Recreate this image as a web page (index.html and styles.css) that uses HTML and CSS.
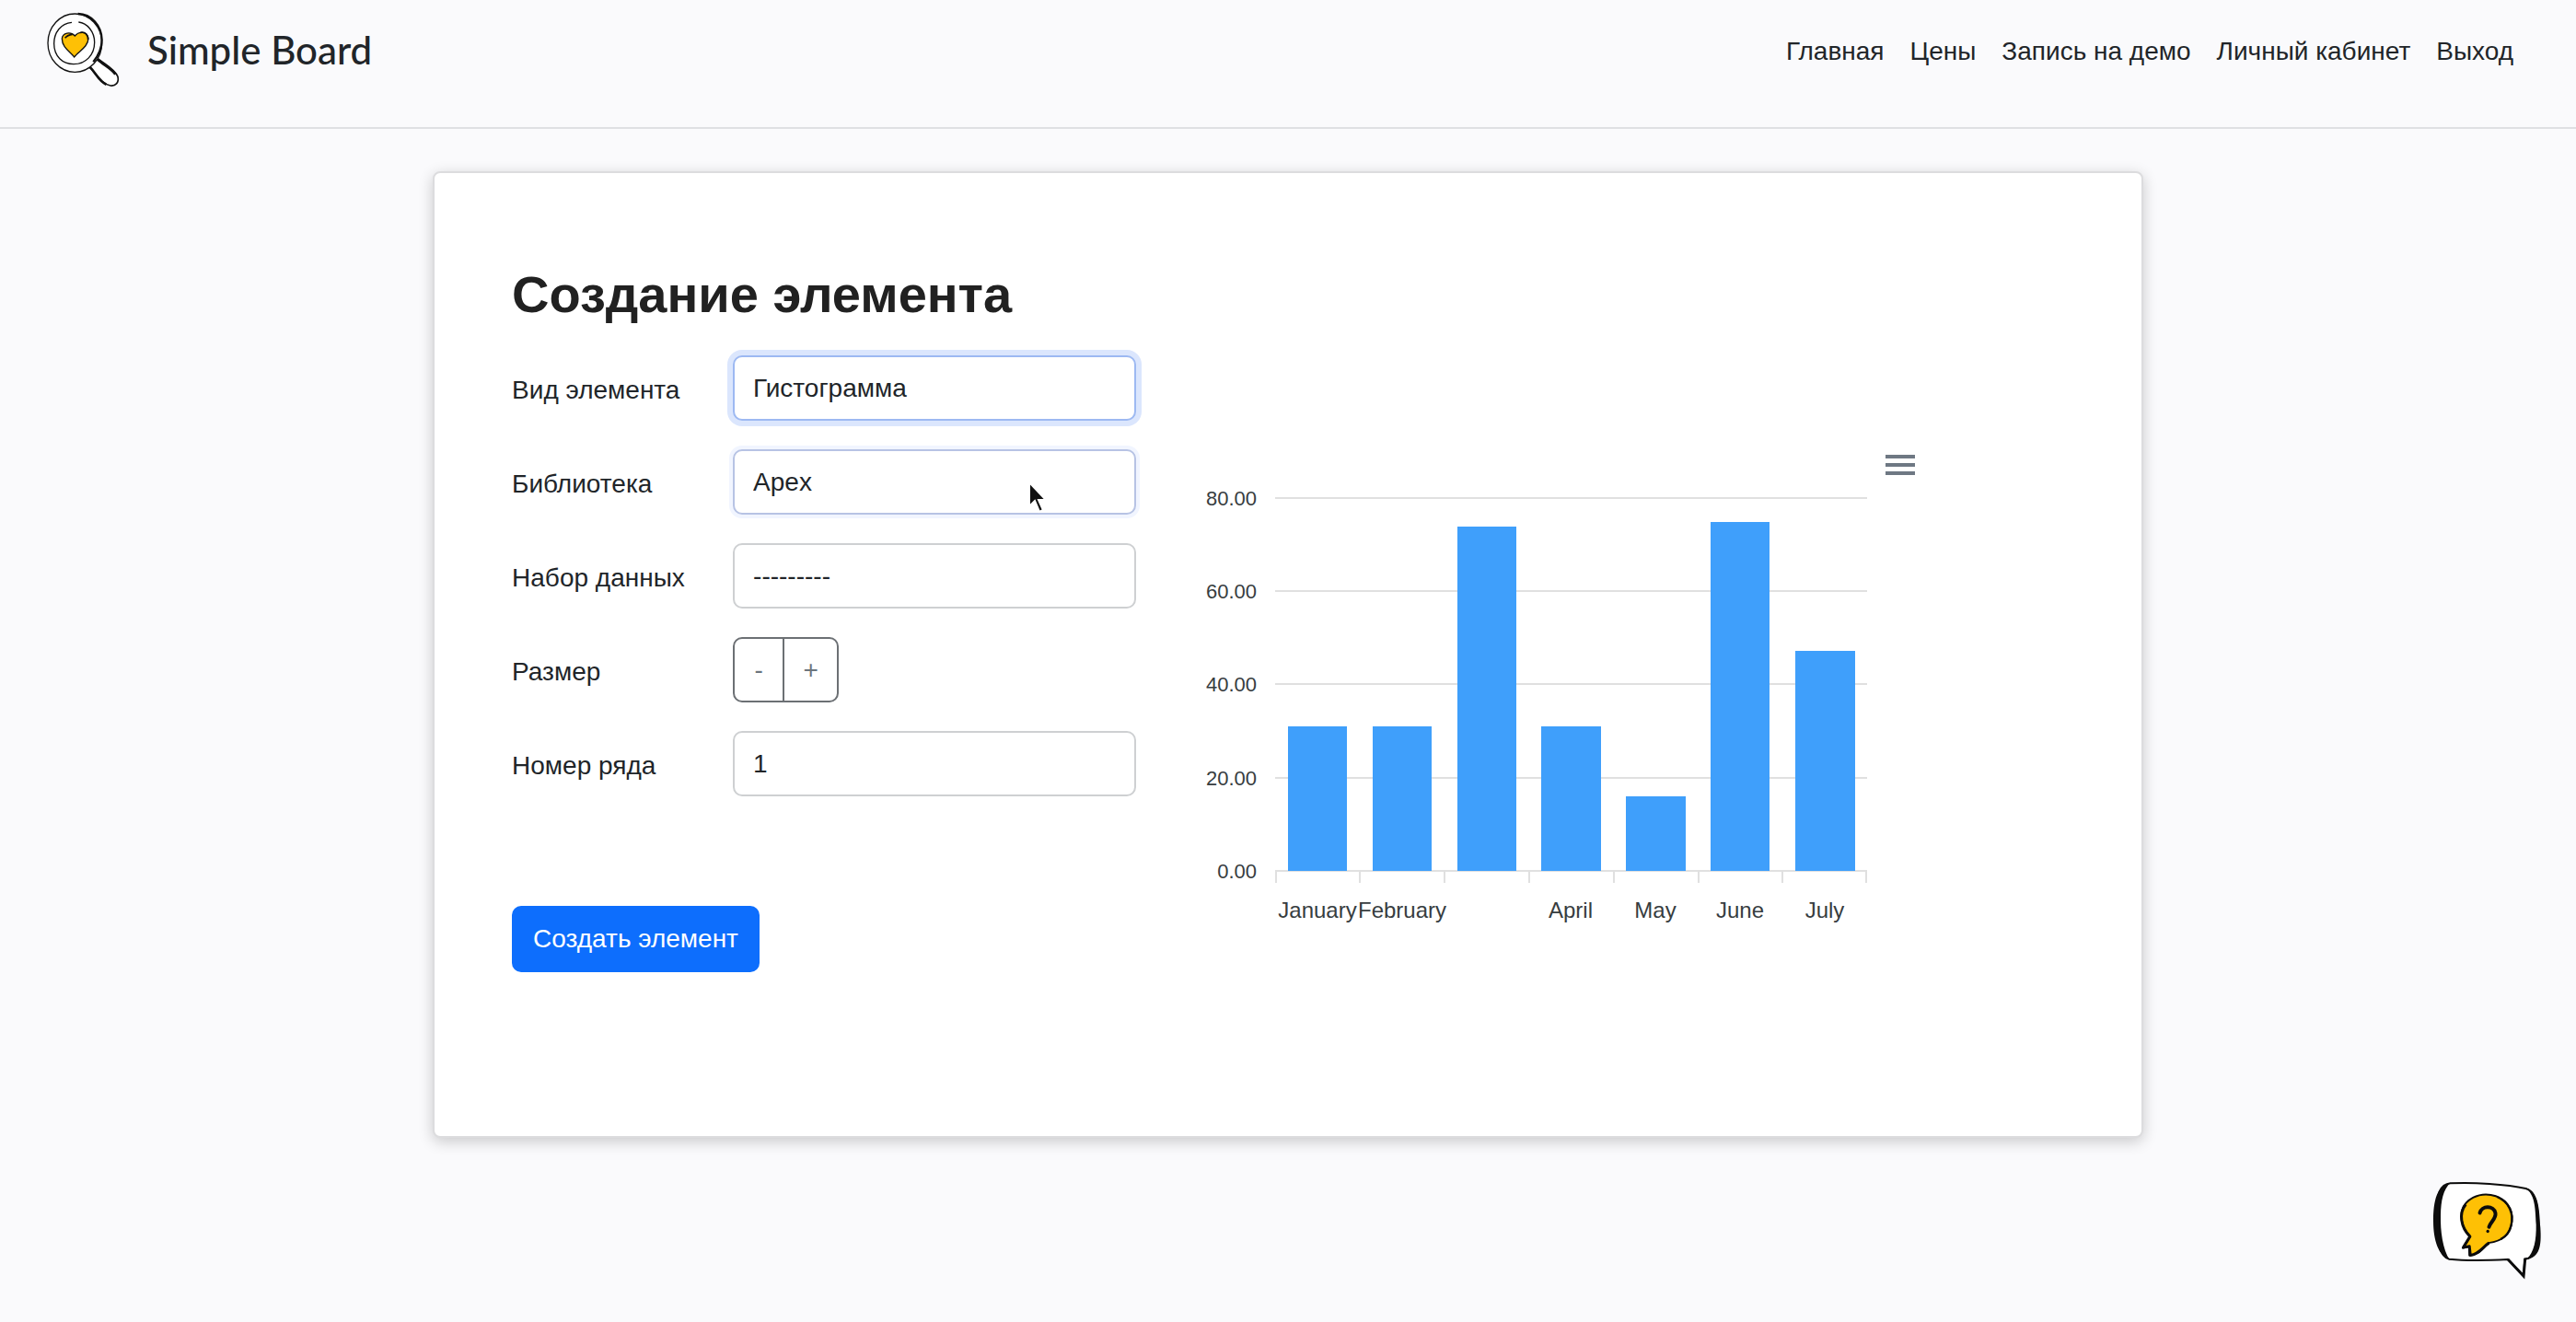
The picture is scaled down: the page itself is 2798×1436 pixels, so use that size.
FILE: index.html
```html
<!DOCTYPE html>
<html lang="ru">
<head>
  <meta charset="UTF-8" />
  <meta name="viewport" content="width=device-width, initial-scale=1.0"/>
  <title>Simple Board</title>
  <link rel="stylesheet" href="styles.css">
</head>
<body>
  <header class="header">
    <a href="#" class="brand">
      <svg class="brand-logo" viewBox="150 38 240 248" aria-hidden="true">
        <path d="M290 217 L318 190 C338 208 374 224 384 250 C388 270 376 281 360 279 C330 274 316 242 290 217 Z" fill="#fff" stroke="#111" stroke-width="5"/>
        <path d="M292 217 C314 240 322 264 346 275 M316 192 C336 211 362 222 376 242" fill="none" stroke="#111" stroke-width="8"/>
        <ellipse cx="244" cy="140" rx="88" ry="95" fill="#fff" stroke="#111" stroke-width="4"/>
        <path d="M254 45 C298 46 331 84 332 130 C332 158 322 180 304 202" fill="none" stroke="#111" stroke-width="7"/>
        <path d="M234 73 C198 76 176 106 176 142 C176 184 204 209 240 209 C280 209 308 178 308 138 C308 103 284 75 256 72" fill="none" stroke="#111" stroke-width="4"/>
        <path d="M242 186 C232 170 202 156 202 126 C204 106 230 102 244 117 C258 100 284 103 288 124 C288 154 254 168 242 186 Z" fill="#fec005" stroke="#111" stroke-width="4"/>
        <path d="M262 106 C278 103 287 113 287 130 M212 124 C218 116 226 113 236 112" fill="none" stroke="#111" stroke-width="5"/>
      </svg>
      <span class="brand-name">Simple Board</span>
    </a>
    <nav class="nav">
      <a href="#">Главная</a>
      <a href="#">Цены</a>
      <a href="#">Запись на демо</a>
      <a href="#">Личный кабинет</a>
      <a href="#">Выход</a>
    </nav>
  </header>

  <main class="card">
    <h1>Создание элемента</h1>
    <div class="content">
      <form class="form">
        <div class="row">
          <label class="label" for="kind">Вид элемента</label>
          <select id="kind" class="control focused">
            <option>Гистограмма</option>
          </select>
        </div>
        <div class="row">
          <label class="label" for="library">Библиотека</label>
          <div class="field">
            <select id="library" class="control leaving">
              <option>Apex</option>
            </select>
            <svg class="cursor" viewBox="0 0 24 36" aria-hidden="true">
              <path d="M2 2 V28 L8 22 L13 34 L17 32 L12 21 H20 Z" fill="#111" stroke="#fff" stroke-width="2"/>
            </svg>
          </div>
        </div>
        <div class="row">
          <label class="label" for="dataset">Набор данных</label>
          <select id="dataset" class="control">
            <option>---------</option>
          </select>
        </div>
        <div class="row">
          <span class="label" id="size-label">Размер</span>
          <div class="btn-group" role="group" aria-labelledby="size-label">
            <button type="button">-</button>
            <button type="button">+</button>
          </div>
        </div>
        <div class="row">
          <label class="label" for="line">Номер ряда</label>
          <input id="line" class="control" type="text" value="1">
        </div>
        <button type="submit" class="submit">Создать элемент</button>
      </form>

      <div class="chart">
        <svg class="plot" viewBox="0 0 740 490" role="img" aria-label="Гистограмма">
          <g class="grid">
            <path d="M85 21H728M85 122H728M85 223H728M85 325H728M85 426H728"/>
            <path d="M86 426V439M177 426V439M269 426V439M361 426V439M453 426V439M545 426V439M636 426V439M727 426V439"/>
          </g>
          <g class="bars">
            <rect x="99" y="269" width="64" height="157"/>
            <rect x="191" y="269" width="64" height="157"/>
            <rect x="283" y="52" width="64" height="374"/>
            <rect x="374" y="269" width="65" height="157"/>
            <rect x="466" y="345" width="65" height="81"/>
            <rect x="558" y="47" width="64" height="379"/>
            <rect x="650" y="187" width="65" height="239"/>
          </g>
          <g class="y-labels">
            <text x="65" y="29">80.00</text>
            <text x="65" y="130">60.00</text>
            <text x="65" y="231">40.00</text>
            <text x="65" y="333">20.00</text>
            <text x="65" y="434">0.00</text>
          </g>
          <g class="x-labels">
            <text x="131" y="477">January</text>
            <text x="223" y="477">February</text>
            <text x="406" y="477">April</text>
            <text x="498" y="477">May</text>
            <text x="590" y="477">June</text>
            <text x="682" y="477">July</text>
          </g>
        </svg>
        <button type="button" class="menu" aria-label="Меню">
          <svg viewBox="0 0 32 22"><path d="M0 2H32M0 11H32M0 20H32" stroke="#6e7883" stroke-width="4"/></svg>
        </button>
      </div>
    </div>
  </main>

  <button type="button" class="help" aria-label="Помощь">
    <svg viewBox="125 95 365 325">
      <path d="M186 105 C260 101 370 108 432 122 C462 130 470 166 473 220 C478 280 482 336 440 350 L429 352 L425 408 L374 354 C310 357 230 358 182 353 C150 345 134 280 138 210 C140 140 152 108 186 105 Z" fill="#fff" stroke="#0c0c0c" stroke-width="6"/>
      <path d="M186 103 C142 112 130 160 130 230 C130 290 146 342 184 356 C160 320 153 260 154 210 C155 160 162 126 186 103 Z" fill="#0c0c0c"/>
      <path d="M430 119 C476 132 476 190 480 250 C484 310 478 346 434 355 C460 330 467 290 466 240 C463 180 462 142 430 119 Z" fill="#0c0c0c"/>
      <path d="M374 354 L425 408 L430 352" fill="none" stroke="#0c0c0c" stroke-width="9"/>
      <path d="M250 279 C228 256 216 222 224 192 C236 158 276 136 318 143 C364 150 392 188 387 228 C384 270 356 294 310 300 C292 318 280 338 248 341 L247 312 L226 316 Z" fill="#fec005" stroke="#0c0c0c" stroke-width="6" stroke-linejoin="round"/>
      <path d="M236 174 C212 204 220 250 250 279 L228 315 L248 311 L251 340 C282 336 290 314 312 300" fill="none" stroke="#0c0c0c" stroke-width="9" stroke-linejoin="round"/>
      <path d="M340 150 C378 166 394 204 384 244 C378 268 366 280 350 288" fill="none" stroke="#0c0c0c" stroke-width="7"/>
      <path d="M282 202 C288 176 328 178 333 202 C336 222 316 232 312 248" fill="none" stroke="#0c0c0c" stroke-width="12" stroke-linecap="round"/>
      <circle cx="308" cy="262" r="5" fill="#0c0c0c"/>
    </svg>
  </button>
</body>
</html>
```
FILE: styles.css
```css
* {
  box-sizing: border-box;
}

body {
  margin: 0;
  min-height: 100vh;
  background: #fafafc;
  color: #212529;
  font-family: "Liberation Sans", Arial, sans-serif;
  font-size: 28px;
  line-height: 42px;
}

.header {
  display: flex;
  justify-content: space-between;
  align-items: center;
  padding: 12px 68px 42px 50px;
  border-bottom: 2px solid #dfe0e3;
}

.brand {
  display: flex;
  align-items: center;
  gap: 30px;
  color: #212529;
  text-decoration: none;
}

.brand-logo {
  width: 80px;
  height: 84px;
}

.brand-name {
  font-family: Lato, sans-serif;
  font-size: 42px;
  font-weight: 500;
}

.nav {
  display: flex;
  gap: 28px;
  padding-top: 4px;
}

.nav a {
  color: #212529;
  text-decoration: none;
}

.card {
  width: 66.4%;
  margin: 46px auto 0;
  padding: 90px 84px 178px;
  background: #fff;
  border: 2px solid #dcdcde;
  border-radius: 8px;
  box-shadow: 0 4px 16px rgba(0, 0, 0, 0.2);
}

h1 {
  margin: 0 0 24px;
  font-size: 56px;
  line-height: 84px;
  color: #212121;
}

.content {
  display: flex;
  align-items: flex-start;
  gap: 66px;
}

.form {
  display: flex;
  flex-direction: column;
  gap: 31px;
  width: 678px;
}

.row {
  display: grid;
  grid-template-columns: 240px 1fr;
  align-items: center;
}

.label {
  padding-top: 4px;
}

.field {
  position: relative;
}

.control {
  appearance: none;
  display: block;
  width: 100%;
  height: 71px;
  padding: 0 20px;
  background: #fff;
  border: 2px solid #ced0d2;
  border-radius: 10px;
  color: #212529;
  font: inherit;
}

.focused {
  border-color: #9db9f2;
  box-shadow: 0 0 0 6px #dbe6fd;
}

.leaving {
  border-color: #b7c3e4;
  box-shadow: 0 0 0 4px #f1f5ff;
}

.cursor {
  position: absolute;
  left: 320px;
  top: 34px;
  width: 24px;
  height: 36px;
}

.btn-group {
  display: flex;
  justify-self: start;
  height: 71px;
  border: 2px solid #6c7074;
  border-radius: 10px;
}

.btn-group button {
  width: 52px;
  padding: 0;
  background: none;
  border: none;
  color: #6c757d;
  font: inherit;
}

.btn-group button + button {
  width: 59px;
  border-left: 2px solid #6c7074;
}

.submit {
  align-self: flex-start;
  height: 72px;
  margin-top: 88px;
  padding: 0 23px;
  background: #0d6efd;
  border: none;
  border-radius: 10px;
  color: #fff;
  font: inherit;
}

.chart {
  display: flex;
  align-items: flex-start;
  padding-top: 108px;
}

.plot {
  width: 740px;
  height: 490px;
  margin-top: 26px;
}

.grid path {
  fill: none;
  stroke: #e0e0e0;
  stroke-width: 2;
}

.bars rect {
  fill: #3f9ffb;
}

.plot text {
  fill: #373d3f;
  font-size: 24px;
  text-anchor: middle;
}

.plot .y-labels text {
  font-size: 22px;
  text-anchor: end;
}

.menu {
  display: flex;
  margin-left: 8px;
  padding: 0;
  background: none;
  border: none;
}

.menu svg {
  width: 32px;
  height: 22px;
}

.help {
  position: fixed;
  right: 35px;
  bottom: 46px;
  padding: 0;
  background: none;
  border: none;
}

.help svg {
  display: block;
  width: 122px;
  height: 108px;
}
```
